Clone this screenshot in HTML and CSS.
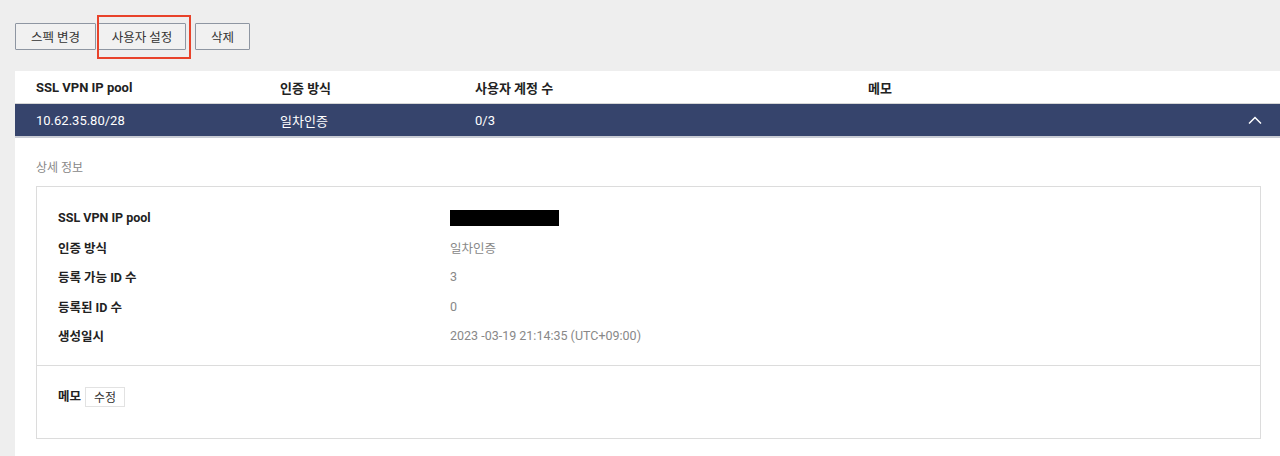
FILE: index.html
```html
<!DOCTYPE html>
<html lang="ko">
<head>
    <meta charset="UTF-8">
    <title>SSL VPN</title>
    <link rel="stylesheet" href="styles.css">
</head>
<body>
    <div class="page">
        <div class="toolbar">
            <button class="btn">스펙 변경</button>
            <span class="highlight"><button class="btn">사용자 설정</button></span>
            <button class="btn">삭제</button>
        </div>

        <div class="panel">
            <div class="row head">
                <span>SSL VPN IP pool</span>
                <span>인증 방식</span>
                <span>사용자 계정 수</span>
                <span>메모</span>
            </div>
            <div class="row selected">
                <span>10.62.35.80/28</span>
                <span>일차인증</span>
                <span>0/3</span>
                <span></span>
                <svg class="chevron" width="14" height="8" viewBox="0 0 14 8"><path d="M1 7.5 L7 1.5 L13 7.5" fill="none" stroke="#fff" stroke-width="1.5"/></svg>
            </div>

            <div class="detail">
                <p class="detail-title">상세 정보</p>
                <div class="detail-box">
                    <div class="info">
                        <div class="info-row"><span class="label">SSL VPN IP pool</span><span class="value"><i class="masked"></i></span></div>
                        <div class="info-row"><span class="label">인증 방식</span><span class="value">일차인증</span></div>
                        <div class="info-row"><span class="label">등록 가능 ID 수</span><span class="value">3</span></div>
                        <div class="info-row"><span class="label">등록된 ID 수</span><span class="value">0</span></div>
                        <div class="info-row"><span class="label">생성일시</span><span class="value">2023 -03-19 21:14:35 (UTC+09:00)</span></div>
                    </div>
                    <div class="memo">
                        <span class="label">메모</span>
                        <button class="btn-small">수정</button>
                    </div>
                </div>
            </div>
        </div>
    </div>
</body>
</html>
```

FILE: styles.css
```css
body, html {
    margin: 0;
    padding: 0;
    background-color: #eeeeee;
    font-family: Roboto, "Noto Sans CJK KR", sans-serif;
    color: #222;
}

.page {
    padding-left: 15px;
}

.toolbar {
    display: flex;
    align-items: center;
    gap: 2px;
    height: 71px;
    padding-top: 1px;
    box-sizing: border-box;
}

.btn {
    height: 27px;
    padding: 0 12px;
    border: 1px solid #8e96a2;
    background: #f1f1f1;
    font-family: Roboto, "Noto Sans CJK KR", sans-serif;
    font-size: 12.5px;
    color: #333;
    border-radius: 1px;
    cursor: pointer;
}

.toolbar > .btn:first-child {
    width: 81px;
}

.toolbar > .btn:last-child {
    width: 55px;
    margin-left: 7px;
}

.highlight {
    position: relative;
    display: flex;
}

.highlight .btn {
    width: 88px;
}

/* annotation box drawn over the button */
.highlight::after {
    content: "";
    position: absolute;
    top: -8px;
    left: -1px;
    right: -5px;
    bottom: -9px;
    border: 2px solid #e8422a;
    pointer-events: none;
}

.panel {
    background: #fff;
}

.row {
    display: grid;
    grid-template-columns: 244px 195px 393px 1fr auto;
    align-items: center;
    padding: 0 18px 0 21px;
    font-size: 13px;
}

.row.head {
    height: 32px;
    font-weight: 700;
    border-bottom: 1px solid #d6d6d6;
}

.row.selected {
    height: 32px;
    background: #36446c;
    color: #fff;
    border-bottom: 2px solid #c9ccd4;
}

.chevron {
    display: block;
}

.detail {
    padding: 20px 19px 18px 21px;
}

.detail-title {
    margin: 0 0 11px;
    font-size: 12px;
    color: #888;
}

.detail-box {
    border: 1px solid #dcdcdc;
}

.info {
    padding: 16px 21px 14px;
    border-bottom: 1px solid #dcdcdc;
}

.info-row {
    display: flex;
    align-items: center;
    height: 29.5px;
    font-size: 12.5px;
}

.label {
    font-weight: 700;
    color: #222;
    font-size: 12.5px;
}

.info-row .label {
    width: 392px;
}

.value {
    color: #888;
}

.masked {
    display: block;
    width: 109px;
    height: 16px;
    background: #000;
}

.memo {
    display: flex;
    align-items: flex-start;
    gap: 4px;
    height: 72px;
    box-sizing: border-box;
    padding: 21px 0 0 21px;
}

.memo .label {
    line-height: 20px;
}

.btn-small {
    height: 20px;
    padding: 0 8px;
    border: 1px solid #e2e2e2;
    background: #fff;
    font-family: Roboto, "Noto Sans CJK KR", sans-serif;
    font-size: 12px;
    color: #333;
}
```
